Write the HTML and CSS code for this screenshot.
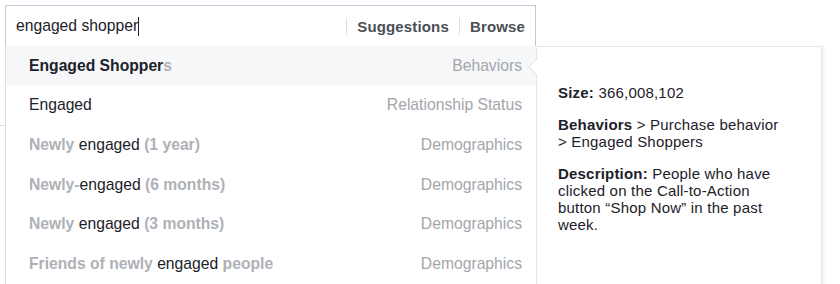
FILE: index.html
```html
<!DOCTYPE html>
<html>
<head>
<meta charset="utf-8">
<link rel="stylesheet" href="styles.css">
</head>
<body>
<div class="page">
  <div class="bg-line"></div>
  <div class="search">
    <div class="query">engaged shopper<span class="caret"></span></div>
    <div class="tabs">
      <span class="sep"></span>
      <span class="tab">Suggestions</span>
      <span class="sep"></span>
      <span class="tab">Browse</span>
    </div>
  </div>
  <div class="below">
    <ul class="list">
      <li class="item active"><span class="name"><b class="m">Engaged Shopper</b><b class="g">s</b></span><span class="cat">Behaviors</span></li>
      <li class="item"><span class="name"><span class="m">Engaged</span></span><span class="cat">Relationship Status</span></li>
      <li class="item"><span class="name"><b class="g">Newly </b><span class="m">engaged</span><b class="g"> (1 year)</b></span><span class="cat">Demographics</span></li>
      <li class="item"><span class="name"><b class="g">Newly-</b><span class="m">engaged</span><b class="g"> (6 months)</b></span><span class="cat">Demographics</span></li>
      <li class="item"><span class="name"><b class="g">Newly </b><span class="m">engaged</span><b class="g"> (3 months)</b></span><span class="cat">Demographics</span></li>
      <li class="item"><span class="name"><b class="g">Friends of newly </b><span class="m">engaged</span><b class="g"> people</b></span><span class="cat">Demographics</span></li>
    </ul>
    <div class="detail">
      <svg class="arrow" width="10" height="20" viewBox="0 0 10 20"><path d="M10 0.5 L1 10 L10 19.5" fill="#fff" stroke="#dddfe2" stroke-width="1"/></svg>
      <p><b>Size:</b> 366,008,102</p>
      <p><b>Behaviors</b> &gt; Purchase behavior<br>&gt; Engaged Shoppers</p>
      <p><b>Description:</b> People who have clicked on the Call-to-Action button “Shop Now” in the past week.</p>
    </div>
  </div>
</div>
</body>
</html>
```
FILE: styles.css
```css
* { box-sizing: border-box; }
html, body { margin: 0; padding: 0; background: #fff; }
body {
  font-family: "Liberation Sans", Arial, sans-serif;
  font-size: 14px;
  color: #1d2129;
  width: 840px;
  height: 284px;
  overflow: hidden;
}
.page {
  position: relative;
  padding: 5px 0 0 5px;
}
.bg-line {
  position: absolute;
  left: 0;
  top: 125px;
  width: 5px;
  height: 1px;
  background: #dddfe2;
}
.search {
  width: 531px;
  height: 41px;
  border: 1px solid #c4c8dc;
  border-bottom: none;
  display: flex;
  align-items: center;
  justify-content: space-between;
  padding: 0 10px 0 10px;
}
.query {
  font-size: 15.7px;
  color: #1d2129;
  display: flex;
  align-items: center;
}
.caret {
  display: inline-block;
  width: 1px;
  height: 19px;
  background: #1d2129;
}
.tabs {
  display: flex;
  align-items: center;
  gap: 10px;
}
.tab {
  font-weight: bold;
  font-size: 15px;
  letter-spacing: 0.15px;
  color: #4b4f56;
}
.sep {
  width: 1px;
  height: 17px;
  background: #dddfe2;
}
.below {
  display: flex;
  align-items: flex-start;
}
.list {
  list-style: none;
  margin: 0;
  padding: 0;
  width: 532px;
  border-left: 1px solid #dddfe2;
  border-right: 1px solid #dddfe2;
}
.item {
  height: 39.6px;
  display: flex;
  align-items: center;
  justify-content: space-between;
  padding: 0 14px 0 23px;
  font-size: 15.7px;
}
.item.active { background: #f6f7f9; }
.item b { font-weight: bold; }
.m { color: #1d2129; }
.g { color: #aeb1b7; }
.cat { color: #a3a6ab; }
.detail {
  position: relative;
  width: 286px;
  height: 250px;
  margin-left: -1px;
  border: 1px solid #e6e7ea;
  box-shadow: 2px 0 2px rgba(0,0,0,0.06);
  background: #fff;
  padding: 37px 32px 0 21px;
  font-size: 15px;
  letter-spacing: 0.2px;
  line-height: 17px;
  color: #1d2129;
}
.detail p { margin: 0 0 15px 0; }
.detail b { font-weight: bold; }
.arrow {
  position: absolute;
  left: -9px;
  top: 10px;
  display: block;
}
```
